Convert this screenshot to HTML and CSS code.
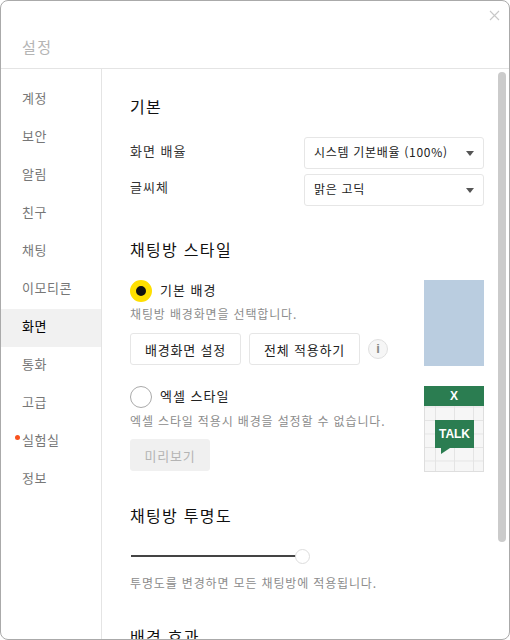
FILE: index.html
```html
<!DOCTYPE html>
<html lang="ko">
<head>
  <meta charset="UTF-8">
  <title>설정</title>
  <link rel="stylesheet" href="styles.css">
</head>
<body>
  <div class="window">
    <header class="titlebar">
      <h1>설정</h1>
      <svg class="close" width="11" height="11" viewBox="0 0 11 11"><path d="M1 1l9 9M10 1l-9 9" stroke="#c8c8c8" stroke-width="1.1" fill="none"/></svg>
    </header>
    <div class="main">
      <nav class="sidebar">
        <a>계정</a>
        <a>보안</a>
        <a>알림</a>
        <a>친구</a>
        <a>채팅</a>
        <a>이모티콘</a>
        <a class="active">화면</a>
        <a>통화</a>
        <a>고급</a>
        <a class="has-dot">실험실</a>
        <a>정보</a>
      </nav>
      <div class="content">
        <h2 class="first">기본</h2>
        <div class="field">
          <label>화면 배율</label>
          <div class="select">시스템 기본배율 (100%)</div>
        </div>
        <div class="field">
          <label>글씨체</label>
          <div class="select">맑은 고딕</div>
        </div>

        <h2 class="style-title">채팅방 스타일</h2>
        <div class="option">
          <div class="option-body">
            <div class="radio-row">
              <span class="radio checked"></span>
              <span class="radio-label">기본 배경</span>
            </div>
            <p class="hint">채팅방 배경화면을 선택합니다.</p>
            <div class="buttons">
              <button>배경화면 설정</button>
              <button>전체 적용하기</button>
              <span class="info">i</span>
            </div>
          </div>
          <div class="thumb-blue"></div>
        </div>
        <div class="option excel">
          <div class="option-body">
            <div class="radio-row">
              <span class="radio"></span>
              <span class="radio-label">엑셀 스타일</span>
            </div>
            <p class="hint">엑셀 스타일 적용시 배경을 설정할 수 없습니다.</p>
            <div class="buttons">
              <button class="disabled">미리보기</button>
            </div>
          </div>
          <div class="thumb-excel">
            <div class="excel-head">X</div>
            <div class="excel-grid">
              <div class="talk">TALK</div>
            </div>
          </div>
        </div>

        <h2 class="opacity-title">채팅방 투명도</h2>
        <div class="slider"><span class="knob"></span></div>
        <p class="hint">투명도를 변경하면 모든 채팅방에 적용됩니다.</p>

        <h2 class="effect-title">배경 효과</h2>
      </div>
      <div class="scrollbar"><span></span></div>
    </div>
  </div>
</body>
</html>
```

FILE: styles.css
```css
* {
  box-sizing: border-box;
}
html, body {
  margin: 0;
  height: 100%;
  background-color: #fff;
}
body {
  font-family: "Noto Sans CJK KR", "Noto Sans", sans-serif;
  font-size: 13px;
  color: #222;
  overflow: hidden;
}
.window {
  width: 510px;
  height: 640px;
  border: 1px solid #aaa;
  border-radius: 8px;
  overflow: hidden;
  display: flex;
  flex-direction: column;
  background-color: #fff;
}
.titlebar {
  height: 68px;
  flex: none;
  border-bottom: 1px solid #e4e4e4;
  position: relative;
  padding: 36px 0 0 21px;
}
.titlebar h1 {
  margin: 0;
  font-size: 15px;
  line-height: 20px;
  font-weight: 400;
  letter-spacing: 1.5px;
  color: #b4b4b4;
}
.close {
  position: absolute;
  top: 9px;
  right: 9px;
}
.main {
  flex: 1;
  min-height: 0;
  display: flex;
}
.sidebar {
  width: 101px;
  flex: none;
  border-right: 1px solid #e4e4e4;
  padding-top: 12px;
  display: flex;
  flex-direction: column;
}
.sidebar a {
  height: 38px;
  line-height: 34px;
  padding-left: 21px;
  letter-spacing: .5px;
  color: #777;
  position: relative;
}
.sidebar a.active {
  background-color: #f1f1f1;
  color: #000;
}
.has-dot:before {
  content: "";
  position: absolute;
  left: 14px;
  top: 12px;
  width: 5px;
  height: 5px;
  border-radius: 50%;
  background-color: #f9521e;
}
.content {
  flex: 1;
  min-width: 0;
  padding: 26px 13px 0 28px;
  overflow: hidden;
}
h2 {
  margin: 0;
  font-size: 16px;
  line-height: 22px;
  font-weight: 400;
  letter-spacing: 1.3px;
  color: #111;
}
.field {
  display: flex;
  justify-content: space-between;
  align-items: flex-start;
  margin-bottom: 5px;
}
.first {
  margin-bottom: 20px;
}
.field label {
  line-height: 28px;
  letter-spacing: 1px;
  color: #333;
}
.field + .field label {
  line-height: 26px;
}
.select {
  width: 180px;
  height: 32px;
  border: 1px solid #e6e6e6;
  border-radius: 3px;
  padding-left: 9px;
  line-height: 28px;
  font-size: 12px;
  letter-spacing: .7px;
  color: #222;
  position: relative;
}
.select:after {
  content: "";
  position: absolute;
  right: 9px;
  top: 13px;
  border-style: solid;
  border-width: 5px 4px 0;
  border-color: #555 transparent transparent;
}
.style-title {
  margin-top: 32px;
  margin-bottom: 20px;
}
.option {
  display: flex;
  justify-content: space-between;
  align-items: flex-start;
}
.excel {
  margin-top: 20px;
}
.radio-row {
  display: flex;
  align-items: center;
  gap: 8px;
  height: 22px;
  letter-spacing: 1px;
  color: #222;
}
.radio-label {
  padding-bottom: 4px;
}
.radio {
  width: 22px;
  height: 22px;
  border-radius: 50%;
  border: 1px solid #aaa;
  background-color: #fff;
}
.radio.checked {
  border: 6px solid #ffdf00;
  background-color: #111;
}
.hint {
  margin: 3px 0 0;
  font-size: 12px;
  line-height: 18px;
  letter-spacing: .85px;
  color: #8c8c8c;
}
.excel .hint {
  margin-top: 4px;
}
.buttons {
  display: flex;
  align-items: center;
  gap: 8px;
  margin-top: 10px;
}
.excel .buttons {
  margin-top: 9px;
}
button {
  font: inherit;
  letter-spacing: .8px;
  height: 32px;
  width: 111px;
  padding: 0;
  background-color: #fff;
  color: #222;
  border: 1px solid #e6e6e6;
  border-radius: 3px;
}
button.disabled {
  width: 80px;
  background-color: #f0f0f0;
  border-color: #f0f0f0;
  color: #b4b4b4;
}
.info {
  width: 20px;
  height: 20px;
  border-radius: 50%;
  border: 1px solid #e0e0e0;
  background-color: #f6f6f6;
  color: #888;
  font-family: "Liberation Sans", sans-serif;
  font-size: 13px;
  font-weight: 700;
  line-height: 18px;
  text-align: center;
}
.thumb-blue {
  width: 60px;
  height: 86px;
  background-color: #bacde0;
}
.thumb-excel {
  width: 60px;
  height: 86px;
  border: 1px solid #dedede;
  border-top: none;
}
.excel-head {
  height: 20px;
  margin: 0 -1px;
  background-color: #2b7d51;
  color: #fff;
  font-family: "Liberation Sans", sans-serif;
  font-size: 12px;
  font-weight: 700;
  line-height: 20px;
  text-align: center;
}
.excel-grid {
  height: 65px;
  position: relative;
  background-color: #f6f6f6;
  background-image:
    linear-gradient(#e4e4e4 1px, transparent 1px),
    linear-gradient(90deg, #e4e4e4 1px, transparent 1px);
  background-size: 19px 13.5px;
  background-position: 10px 14px;
}
.talk {
  position: absolute;
  left: 10px;
  top: 14px;
  width: 39px;
  height: 28px;
  background-color: #2b7d51;
  color: #fff;
  font-family: "Liberation Sans", sans-serif;
  font-size: 12px;
  font-weight: 700;
  line-height: 28px;
  text-align: center;
}
.talk:after {
  content: "";
  position: absolute;
  left: 6px;
  top: 28px;
  border-style: solid;
  border-width: 6px 9px 0 0;
  border-color: #2b7d51 transparent transparent;
}
.opacity-title {
  margin-top: 32px;
}
.slider {
  width: 180px;
  height: 15px;
  margin-top: 23px;
  position: relative;
}
.slider:before {
  content: "";
  position: absolute;
  left: 1px;
  right: 14px;
  top: 6px;
  height: 2px;
  background-color: #444;
}
.knob {
  position: absolute;
  right: 0;
  top: 0;
  width: 15px;
  height: 15px;
  border-radius: 50%;
  border: 1px solid #ddd;
  background-color: #fff;
}
.slider + .hint {
  margin-top: 10px;
}
.effect-title {
  margin-top: 33px;
}
.scrollbar {
  width: 12px;
  flex: none;
  padding: 3px 3px 0 1px;
}
.scrollbar span {
  display: block;
  width: 8px;
  height: 470px;
  border-radius: 4px;
  background-color: #cbcbcb;
}
```
